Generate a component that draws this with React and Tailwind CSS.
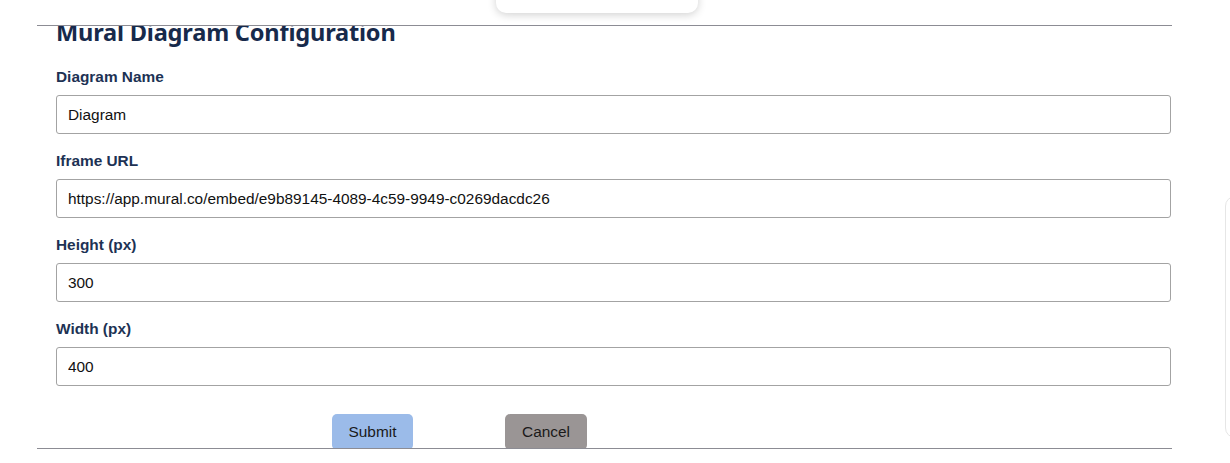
import React, { useState } from 'react';

const fields = [
  { key: 'name', label: 'Diagram Name', value: 'Diagram' },
  { key: 'url', label: 'Iframe URL', value: 'https://app.mural.co/embed/e9b89145-4089-4c59-9949-c0269dacdc26' },
  { key: 'height', label: 'Height (px)', value: '300' },
  { key: 'width', label: 'Width (px)', value: '400' },
];

const Field = ({ label, value, onChange }) => (
  <div className="flex flex-col gap-[9px]">
    <label className="h-[18px] text-[15.4px] leading-[18px] font-bold text-[#1d3254]">
      {label}
    </label>
    <input
      type="text"
      value={value}
      onChange={onChange}
      className="w-full h-[39px] px-[11px] border border-[#a3a3a3] rounded-[3px] bg-white text-[15.4px] text-[#111] outline-none"
    />
  </div>
);

export default function App() {
  const [values, setValues] = useState(
    Object.fromEntries(fields.map((f) => [f.key, f.value]))
  );

  return (
    <div className="relative w-[1230px] h-[463px] overflow-hidden bg-white font-['Liberation_Sans',Arial,sans-serif]">
      {/* clipped popover at the top */}
      <div className="absolute left-[496px] top-[-12px] w-[202px] h-[25px] rounded-b-[10px] bg-white shadow-[0_2px_8px_rgba(0,0,0,0.18)] z-10" />

      {/* faint side panel on the right edge */}
      <div className="absolute left-[1225px] top-[196px] w-[30px] h-[242px] rounded-[10px] border border-[#e6e6e6] bg-white" />

      <div className="relative ml-[37px] mt-[25px] w-[1135px] h-[424px] border-y border-[#8c8c94] overflow-hidden bg-white">
        <div className="absolute left-[849px] top-[-1px] w-[92px] h-px bg-[#7d9ac6]" />
        <div className="flex flex-col pl-[19px] pr-[1px]">
          <h2 className="mt-[-8px] mb-[22px] text-[23.6px] leading-[28px] font-bold text-[#172a4b] font-['Noto_Sans',sans-serif] tracking-[-0.2px]">
            Mural Diagram Configuration
          </h2>

          <div className="flex flex-col gap-[18px]">
            {fields.map((f) => (
              <Field
                key={f.key}
                label={f.label}
                value={values[f.key]}
                onChange={(e) => setValues({ ...values, [f.key]: e.target.value })}
              />
            ))}
          </div>

          <div className="flex mt-[28px] pl-[276px] gap-[92px]">
            <button className="w-[81px] h-[36px] rounded-[5px] bg-[#9bbbe9] text-[15.4px] text-[#1a1a1a]">
              Submit
            </button>
            <button className="w-[82px] h-[36px] rounded-[5px] bg-[#9a9595] text-[15.4px] text-[#1a1a1a]">
              Cancel
            </button>
          </div>
        </div>
      </div>
    </div>
  );
}
